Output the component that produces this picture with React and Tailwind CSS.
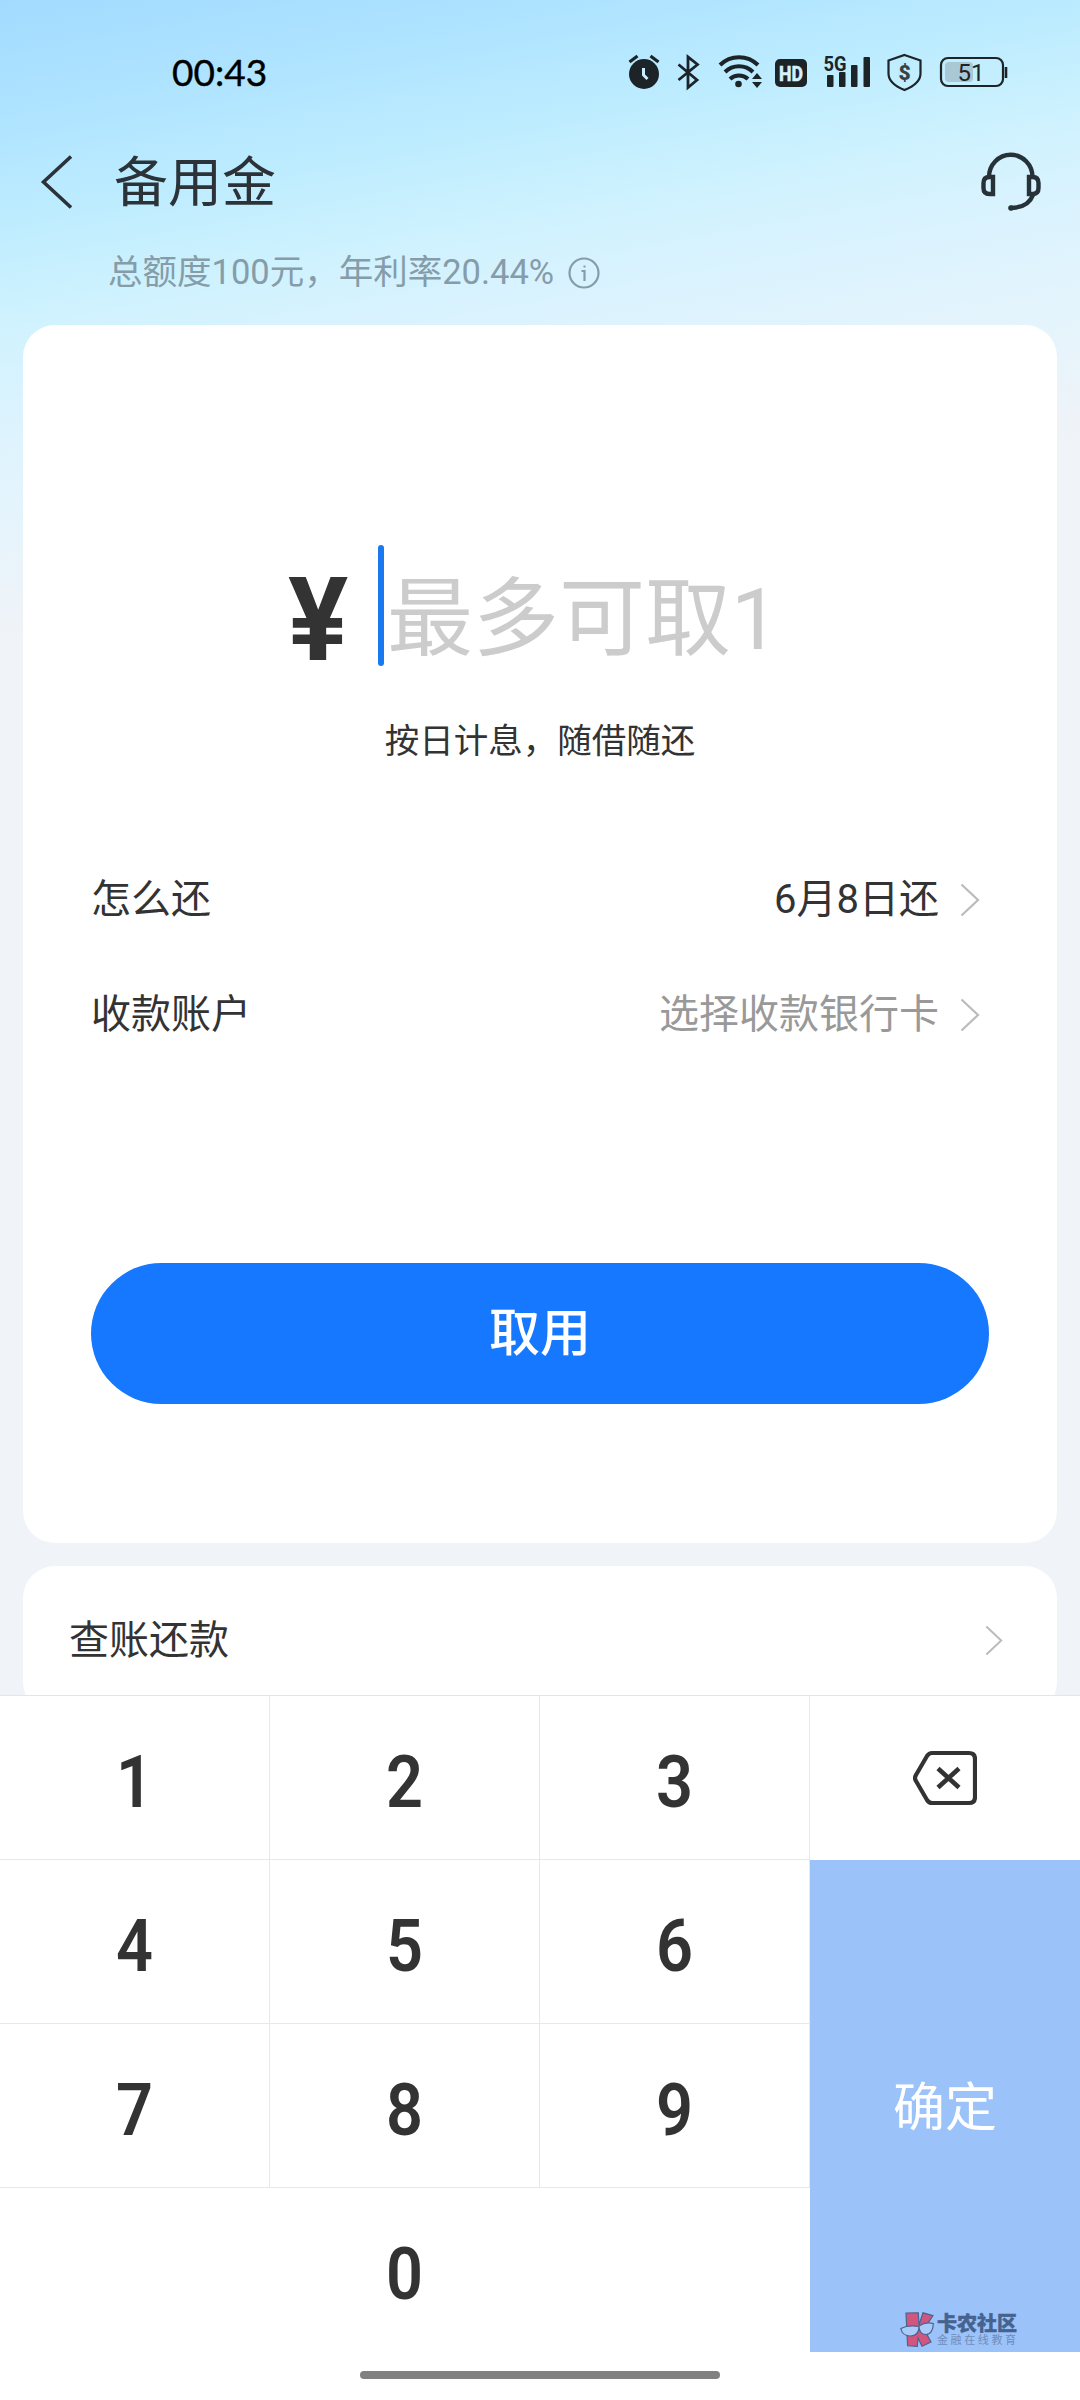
import React from "react";

const KEYS = ["1", "2", "3", "4", "5", "6", "7", "8", "9"];

function Arrow({ className }) {
  return (
    <svg viewBox="0 0 20 34" className={className} fill="none" stroke="#bbb" strokeWidth="2.2">
      <path d="M1.5 1.5 18 17 1.5 32.5" />
    </svg>
  );
}

function Key({ label, className = "" }) {
  return (
    <button className={`border-[#e8e8e8] pt-[10px] ${className}`}>
      <span className="inline-block scale-x-[0.9]">{label}</span>
    </button>
  );
}

// --- BARRA DE ESTADO ---
function StatusBar() {
  return (
    <div className="flex h-[108px] items-center pl-[172px]">
      <span className="mt-9 w-[456px] font-['Lato','Roboto',sans-serif] text-[37px] leading-[44px] text-black [-webkit-text-stroke:0.4px_#000]">00:43</span>
      <svg viewBox="0 0 390 40" className="mt-9 h-10 w-[390px]" fill="none" stroke="#1c2428" strokeWidth="2.6">
        {/* alarma */}
        <circle cx="16" cy="22" r="15" fill="#1c2428" stroke="none" />
        <path d="M1.5 10l8-6M30.5 10l-8-6" strokeWidth="3.2" />
        <path d="M15.5 16v7l4 4" stroke="#c9effd" strokeWidth="3" />
        {/* bluetooth */}
        <path d="M50.5 12.5 69 28 60 35.5V5l9.5 7.5L50.5 28" strokeWidth="2.8" />
        {/* wifi */}
        <g strokeWidth="4">
          <path d="M92 13a27 27 0 0 1 38 0" />
          <path d="M97 20a20 20 0 0 1 28 0" />
          <path d="M102 27a13 13 0 0 1 18 0" />
        </g>
        <circle cx="110.5" cy="32" r="3.3" fill="#1c2428" stroke="none" />
        <path d="M124 27l5-6 5 6zM124 30l5 6 5-6z" fill="#1c2428" stroke="none" />
        {/* HD */}
        <rect x="147" y="7" width="32" height="28" rx="5" fill="#1c2428" stroke="none" />
        <text x="151" y="28.5" fontSize="21" fontWeight="800" fontFamily="Roboto" fill="#d5f2fd" stroke="#d5f2fd" strokeWidth="0.4" textLength="24" lengthAdjust="spacingAndGlyphs">HD</text>
        {/* señal */}
        <text x="195.5" y="18.5" fontSize="20" fontWeight="700" fontFamily="Roboto" fill="#1c2428" stroke="none" textLength="23" lengthAdjust="spacingAndGlyphs">5G</text>
        <g fill="#1c2428" stroke="none">
          <rect x="199" y="23" width="6.5" height="12" rx="1" />
          <rect x="211" y="20" width="6.5" height="15" rx="1" />
          <rect x="223" y="13" width="6.5" height="22" rx="1" />
          <rect x="235.5" y="5" width="6.5" height="30" rx="1" />
        </g>
        {/* escudo */}
        <path d="M276.5 3 292.5 8.5v13c0 8-6 12.5-16 16.5-10-4-16-8.5-16-16.5v-13z" strokeWidth="2.2" />
        <text x="276.5" y="28" textAnchor="middle" fontSize="21" fontWeight="900" fontFamily="Roboto" fill="#3a4146" stroke="none">$</text>
        {/* batería */}
        <rect x="313" y="6" width="62" height="28" rx="7" strokeWidth="2.2" />
        <rect x="317" y="10" width="28" height="20" rx="4" fill="#a9c8d6" stroke="none" />
        <path d="M378 15v11" strokeWidth="2.6" />
        <text x="329.5" y="28.5" fontSize="23.5" fontFamily="Roboto" fill="#1c2428" stroke="none" textLength="27" lengthAdjust="spacingAndGlyphs">51</text>
      </svg>
    </div>
  );
}

function Row({ label, value, muted }) {
  return (
    <div className="flex h-[115px] items-center text-[40px]">
      <span className="flex-1 pt-px text-[#333]">{label}</span>
      <span className={muted ? "pt-px text-[#999]" : "pt-px text-[#333]"}>{value}</span>
      <Arrow className="ml-[21px] mr-[9px] h-[34px] w-5" />
    </div>
  );
}

function Watermark() {
  return (
    <div className="flex items-center gap-[3px]">
      <svg viewBox="0 0 34 36" className="h-9 w-[34px]" stroke="#4a6390" strokeWidth="1.2">
        <path d="M6 1 18.3.8 19 13 23 .8l10 2.8L24 17l7 13-9 4.3L18 26l-.7 8.3-9.7-.5z" fill="#d0567f" />
        <path d="M.8 16.5c6-3 12-3 18.2-2 0 6-3 9.5-8.500 9.500-5 0-8.700-2.500-9.700-7.500zM19 14c4-3 9-4 14.300-2.500 0 7-3 11-7.300 11-4 0-7-3-7-8.500z" fill="#a9cbf9" />
      </svg>
      <div className="flex flex-col">
        <span className="text-[20px] font-black leading-[22px] text-[#46628f] [-webkit-text-stroke:0.4px_#46628f]">卡农社区</span>
        <span className="text-[11px] leading-[12px] tracking-[2.6px] text-[#6f8cbc]">金融在线教育</span>
      </div>
    </div>
  );
}

export default function App() {
  return (
    <div className="relative flex h-[2400px] w-[1080px] flex-col overflow-hidden bg-[#f0f3f8] font-['Roboto','Noto_Sans_CJK_SC',sans-serif]">
      {/* fondo degradado */}
      <div className="absolute inset-x-0 top-0 h-[640px] bg-[linear-gradient(169.5deg,#a2dbff_0%,#b1e5ff_16%,#bdecff_26%,#cff2fe_38%,#dcf3fe_50%,#e5f4fc_62%,#f0f3f8_76%)]" />

      <div className="relative">
        <StatusBar />
        <header className="flex h-[148px] items-center pl-10 pr-[39px]">
          <svg viewBox="0 0 32 54" className="h-[54px] w-8" fill="none" stroke="#2b3338" strokeWidth="3.6">
            <path d="M31 1.5 3.5 27 31 52.5" />
          </svg>
          <h1 className="ml-[42px] mt-[3px] flex-1 text-[54px] leading-none text-[#2b3338]">备用金</h1>
          <svg viewBox="0 0 60 60" className="h-[60px] w-[60px]" fill="none" stroke="#263238" strokeWidth="4.4">
            <path d="M8 25a21.5 22 0 0 1 43.5 0" />
            <path d="M12 25H8.5Q2.5 25 2.5 31v5q0 6 6 6H12zM48 25h3.5q6 0 6 6v5q0 6-6 6H48z" />
            <path d="M52 43c-3 8-10 13-23 13" />
            <circle cx="30" cy="56" r="2.8" fill="#263238" stroke="none" />
          </svg>
        </header>
        <div className="-mt-[8px] flex h-[49px] items-center pl-[108px] text-[34.5px] text-[#869ca8]">
          总额度100元，年利率20.44%
          <svg viewBox="0 0 32 32" className="ml-3.5 h-8 w-8" fill="none" stroke="#869ca8" strokeWidth="2.2">
            <circle cx="16" cy="16" r="14.5" />
            <path d="M13.5 14h3v10M15.5 9.5h2" />
          </svg>
        </div>
      </div>

      {/* --- TARJETA PRINCIPAL --- */}
      <main className="relative mx-[23px] mt-[28px] flex h-[1218px] shrink-0 flex-col rounded-[32px] bg-white px-[68px]">
        <div className="mt-[220px] flex h-[121px] items-center pl-[194px]">
          <span className="mt-7 w-[93px] pl-[3px] text-[116px] font-bold leading-none text-[#333]">
            <span className="inline-block origin-left scale-x-[0.97]">¥</span>
          </span>
          <span className="h-[121px] w-1.5 rounded-full bg-[#1a78f0]" />
          <span className="mt-[29px] whitespace-nowrap pl-[3px] text-[86px] leading-none text-[#ccc]">最多可取1</span>
        </div>
        <p className="mt-[50px] text-center text-[34.5px] leading-[50px] text-[#333]">按日计息，随借随还</p>
        <div className="mt-[76px]">
          <Row label="怎么还" value="6月8日还" />
          <Row label="收款账户" value="选择收款银行卡" muted />
        </div>
        <button className="mt-[191px] h-[141px] rounded-full bg-[#1677ff] pt-0.5 text-[51px] font-medium text-white">取用</button>
      </main>

      <section className="relative mx-[23px] mt-[23px] flex h-[148px] shrink-0 items-center rounded-[32px] bg-white pl-[46px] pr-[54px] text-[40px] text-[#333]">
        <span className="flex-1 pt-0.5">查账还款</span>
        <Arrow className="h-[31px] w-[18px]" />
      </section>

      {/* --- TECLADO --- */}
      <div className="relative -mt-[19px] flex h-[705px] shrink-0 flex-col bg-white">
        <div className="grid h-[657px] grid-cols-[270px_270px_270px_270px] grid-rows-[164px_164px_164px_164px] border-t border-[#e5e5e5] text-[72px] font-semibold leading-none text-[#333]">
          {KEYS.slice(0, 3).map((k) => (
            <Key key={k} label={k} className="border-b border-r" />
          ))}
          <button className="grid place-items-center">
            <svg viewBox="0 0 64 56" className="h-14 w-16" fill="none" stroke="#333" strokeWidth="4.2">
              <path d="M19 3h37q6 0 6 6v38q0 6-6 6H19q-3 0-5-3L3 31q-2-3 0-6L14 6q2-3 5-3z" />
              <path d="M25 18.5l21 19M46 18.5l-21 19" strokeWidth="4.6" />
            </svg>
          </button>
          {KEYS.slice(3, 6).map((k) => (
            <Key key={k} label={k} className="border-b border-r" />
          ))}
          <button className="row-span-3 flex flex-col items-center bg-[#9bc2f9] text-[52px] font-normal leading-[78px] text-white">
            <span className="mt-[210px]">确定</span>
          </button>
          {KEYS.slice(6).map((k) => (
            <Key key={k} label={k} className="border-b border-r" />
          ))}
          <Key label="0" className="col-span-3" />
        </div>
        <div className="flex h-[46px] items-center justify-center">
          <div className="h-2 w-[360px] rounded-full bg-[#808080]" />
        </div>
        <div className="absolute left-[900px] top-[617px]">
          <Watermark />
        </div>
      </div>
    </div>
  );
}
